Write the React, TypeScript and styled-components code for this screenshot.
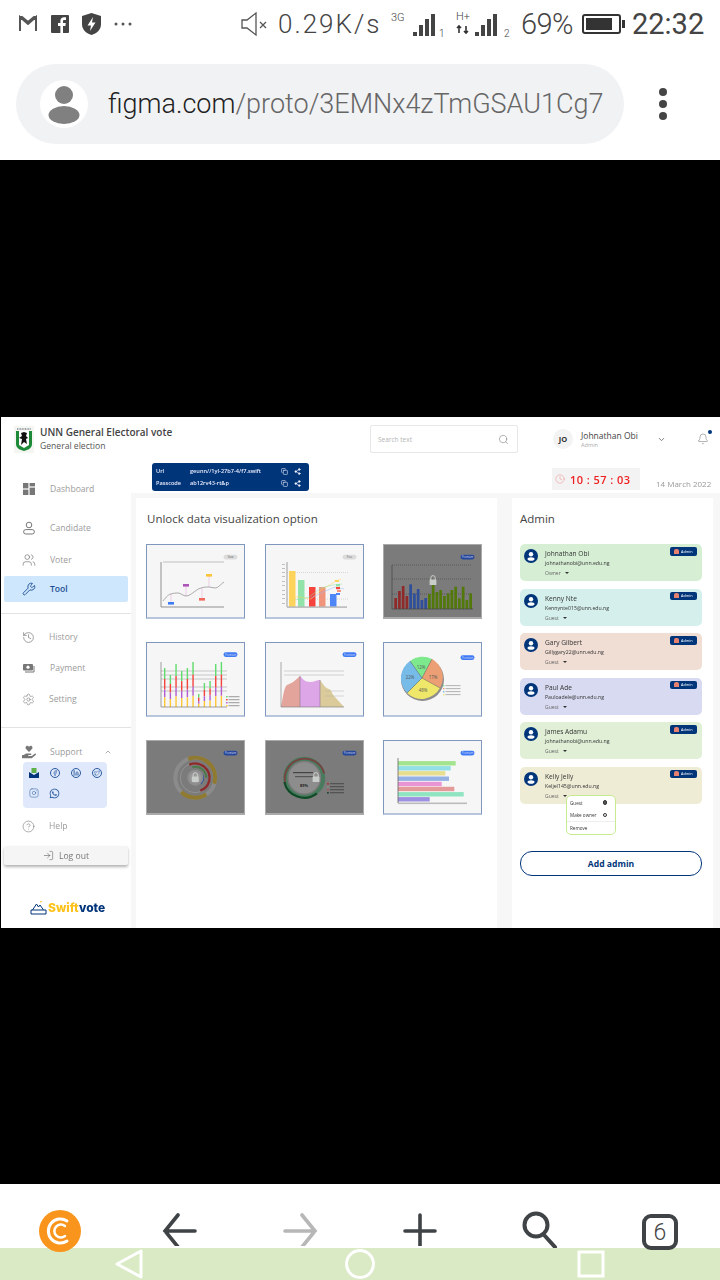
import React from "react";
import styled, { createGlobalStyle } from "styled-components";
import {
  Bell,
  ChevronDown,
  ChevronUp,
  CircleHelp,
  Clock,
  Copy,
  Facebook,
  History,
  Instagram,
  Linkedin,
  LogIn,
  Search,
  Settings,
  Share2,
  Twitter,
  Users,
  Wrench,
} from "lucide-react";
import { FaHandHoldingHeart, FaWhatsapp } from "react-icons/fa";

const NAVY = "#01357a";

const GlobalStyle = createGlobalStyle`
  html, body { margin: 0; padding: 0; background: #000; }
  * { box-sizing: border-box; }
`;

const Screen = styled.div`
  width: 720px;
  height: 1280px;
  background: #000;
  display: flex;
  flex-direction: column;
  overflow: hidden;
  font-family: "Open Sans", sans-serif;
`;

/* ---------- phone chrome ---------- */

const StatusBar = styled.div`
  height: 48px;
  background: #fff;
  display: flex;
  align-items: center;
  justify-content: space-between;
  padding: 0 16px 0 18px;
  color: #444;
  font-family: Roboto, sans-serif;
  font-weight: 300;
`;

const StatusGroup = styled.div<{ $gap: number }>`
  display: flex;
  align-items: center;
  gap: ${(p) => p.$gap}px;
`;

const Speed = styled.span`
  font-size: 26px;
  letter-spacing: 2px;
  width: 106px;
  margin-left: 2px;
  white-space: nowrap;
`;

const Percent = styled.span`
  font-size: 29px;
  width: 54px;
  letter-spacing: -0.6px;
`;

const Time = styled.span`
  font-size: 29px;
  font-weight: 400;
  width: 72px;
  white-space: nowrap;
`;

const UrlRow = styled.div`
  height: 112px;
  background: #fff;
  display: flex;
  align-items: center;
  padding: 0 0 0 16px;
  position: relative;
`;

const UrlPill = styled.div`
  width: 608px;
  height: 80px;
  background: #f1f2f4;
  border-radius: 40px;
  display: flex;
  align-items: center;
  padding-left: 24px;
  gap: 20px;
`;

const SiteBadge = styled.div`
  width: 48px;
  height: 48px;
  border-radius: 50%;
  background: #fff;
  display: flex;
  align-items: center;
  justify-content: center;
`;

const UrlText = styled.div`
  font-family: Roboto, sans-serif;
  font-weight: 300;
  font-size: 27px;
  color: #666;
  white-space: nowrap;
  b {
    font-weight: 300;
    color: #222;
  }
`;

const MoreDots = styled.div`
  margin-left: 35px;
  display: flex;
  flex-direction: column;
  gap: 4px;
  span {
    width: 8px;
    height: 8px;
    border-radius: 50%;
    background: #444;
  }
`;

const BlackBand = styled.div<{ $h: number }>`
  height: ${(p) => p.$h}px;
  flex: none;
`;

const ToolBar = styled.div`
  height: 64px;
  flex: none;
  background: #fff;
  display: grid;
  grid-template-columns: repeat(6, 120px);
  justify-items: center;
  padding-top: 26px;
  position: relative;
  z-index: 1;
  svg {
    display: block;
  }
`;

const TabCounter = styled.svg`
  margin-top: 3px;
`;

const NavBar = styled.div`
  height: 32px;
  flex: none;
  background: #d9eac5;
  display: flex;
  align-items: center;
  gap: 202px;
  padding-left: 115px;
  svg {
    display: block;
  }
`;

/* ---------- web frame ---------- */

const Frame = styled.div`
  height: 511px;
  flex: none;
  margin-left: 1px;
  background: #fff;
  display: grid;
  grid-template-columns: 130px 1fr;
  grid-template-rows: 43px 1fr;
  filter: blur(0.3px);
`;

const Header = styled.header`
  grid-column: 1 / 3;
  display: flex;
  align-items: center;
  padding-left: 13px;
  padding-top: 1px;
`;

const Brand = styled.div`
  width: 356px;
  display: flex;
  gap: 6px;
  align-items: center;
`;

const BrandTitle = styled.div`
  font-size: 10px;
  font-weight: 600;
  line-height: 14px;
  color: #444;
  white-space: nowrap;
`;

const BrandSub = styled.div`
  font-size: 8.6px;
  line-height: 14px;
  color: #555;
`;

const SearchBox = styled.div`
  width: 148px;
  height: 28px;
  border: 1px solid #e8e8e8;
  border-radius: 2px;
  display: flex;
  align-items: center;
  justify-content: space-between;
  padding: 0 8px 0 7px;
  font-size: 6.5px;
  color: #b5b5b5;
`;

const UserBlock = styled.div`
  margin-left: 35px;
  display: flex;
  align-items: center;
  width: 120px;
`;

const Initials = styled.div`
  width: 20px;
  height: 20px;
  border-radius: 50%;
  background: #f3f3f3;
  color: #333;
  font-size: 7.5px;
  font-weight: 700;
  display: flex;
  align-items: center;
  justify-content: center;
  margin-right: 8px;
`;

const UserName = styled.div`
  font-size: 8.5px;
  line-height: 11px;
  color: #444;
  white-space: nowrap;
`;

const UserRole = styled.div`
  font-size: 5.6px;
  line-height: 8px;
  color: #aaa;
`;

const UserCaret = styled.span`
  margin-left: 19px;
  display: flex;
`;

const BellWrap = styled.div`
  margin-left: 24px;
  position: relative;
  display: flex;
  &::after {
    content: "";
    position: absolute;
    right: -3px;
    top: -3px;
    width: 4px;
    height: 4px;
    border-radius: 50%;
    background: ${NAVY};
  }
`;

const Sidebar = styled.aside`
  display: flex;
  flex-direction: column;
  padding-top: 16px;
`;

const NavItem = styled.div<{ $active?: boolean; $after: number }>`
  height: 26px;
  flex: none;
  margin: 0 3px ${(p) => p.$after}px 3px;
  padding-left: 18px;
  border-radius: 2px;
  display: flex;
  align-items: center;
  gap: 14px;
  font-size: 8.6px;
  font-weight: ${(p) => (p.$active ? 600 : 400)};
  color: ${(p) => (p.$active ? "#1c4f92" : "#9b9b9b")};
  background: ${(p) => (p.$active ? "#cfe7fd" : "transparent")};
  svg {
    flex: none;
    color: ${(p) => (p.$active ? "#1c4f92" : "#777")};
  }
`;

const SideRule = styled.hr<{ $after: number }>`
  border: 0;
  height: 1px;
  width: 100%;
  background: #e2e2e2;
  margin: 0 0 ${(p) => p.$after}px 0;
  flex: none;
`;

const SupportCaret = styled.span`
  margin-left: 8px;
  display: flex;
`;

const SocialBox = styled.div`
  width: 84px;
  height: 46px;
  margin: -3px 0 5px 22px;
  flex: none;
  border-radius: 4px;
  background: #dfe9fb;
  display: grid;
  grid-template-columns: repeat(4, 21px);
  align-content: start;
  padding-top: 6px;
  row-gap: 10px;
  justify-items: center;
  color: #2a5a9f;
`;

const SocialRound = styled.span`
  width: 10px;
  height: 10px;
  border: 0.7px solid #2a5a9f;
  border-radius: 50%;
  display: flex;
  align-items: center;
  justify-content: center;
`;

const LogoutBar = styled.div`
  height: 19px;
  margin: 7px 3px 0 3px;
  flex: none;
  background: #f5f5f5;
  border-radius: 2px;
  box-shadow: 0 2px 3px rgba(0, 0, 0, 0.3);
  display: flex;
  align-items: center;
  justify-content: center;
  gap: 5px;
  font-size: 8.6px;
  color: #777;
`;

const SwiftLogo = styled.div`
  margin: 35px 0 0 29px;
  display: flex;
  align-items: center;
  gap: 1px;
  font-family: Inter, sans-serif;
  font-weight: 800;
  font-size: 12px;
  color: #ffc21a;
  b {
    font-weight: 800;
    color: ${NAVY};
  }
`;

const Content = styled.div`
  display: flex;
  flex-direction: column;
  min-height: 0;
`;

const SubRow = styled.div`
  height: 33px;
  flex: none;
  display: flex;
  align-items: flex-start;
  padding: 3px 8px 0 21px;
`;

const Credentials = styled.div`
  width: 157px;
  height: 28px;
  border-radius: 3px;
  background: ${NAVY};
  color: #eef;
  font-size: 5.6px;
  font-weight: 600;
  padding: 2px 0 0 4px;
`;

const CredRow = styled.div`
  height: 12px;
  display: grid;
  grid-template-columns: 34px 91px 13px 10px;
  align-items: center;
  svg {
    display: block;
  }
`;

const Timer = styled.div`
  margin: 5px 0 0 243px;
  width: 88px;
  height: 22px;
  background: #f3f3f3;
  display: flex;
  align-items: center;
  gap: 5px;
  padding-left: 3px;
  font-size: 11px;
  font-weight: 600;
  letter-spacing: 0.45px;
  color: #f01f1f;
  white-space: nowrap;
`;

const DateLabel = styled.div`
  margin: 15px 0 0 16px;
  font-size: 8px;
  color: #999;
  white-space: nowrap;
`;

const MainArea = styled.main`
  flex: 1;
  background: #f7f7f7;
  display: flex;
  gap: 15px;
  padding: 5px 7px 0 5px;
  min-height: 0;
`;

const Panel = styled.section<{ $w: number; $pl: number; $pr: number }>`
  width: ${(p) => p.$w}px;
  background: #fff;
  padding: 13px ${(p) => p.$pr}px 0 ${(p) => p.$pl}px;
  position: relative;
`;

const PanelTitle = styled.h2<{ $inset?: number }>`
  margin: 0 0 17px ${(p) => p.$inset ?? 0}px;
  font-size: 11.5px;
  line-height: 16px;
  font-weight: 400;
  color: #444;
  white-space: nowrap;
`;

const ChartGrid = styled.div`
  display: grid;
  grid-template-columns: repeat(3, 99px);
  grid-auto-rows: 75px;
  column-gap: 19.5px;
  row-gap: 23px;
`;

const ChartCard = styled.div<{ $locked?: boolean }>`
  background: ${(p) => (p.$locked ? "#7b7b7b" : "#f6f6f6")};
  border: 1px solid ${(p) => (p.$locked ? "#aaa" : "#7f97bd")};
  border-bottom: 2px solid ${(p) => (p.$locked ? "#aaa" : "#b7c6dd")};
  svg {
    display: block;
    margin: -1px;
    width: 99px;
    height: 75px;
  }
`;

const AdminList = styled.div`
  display: flex;
  flex-direction: column;
  gap: 7.5px;
`;

const AdminCard = styled.div<{ $bg: string }>`
  height: 37px;
  border-radius: 5px;
  background: ${(p) => p.$bg};
  display: flex;
  padding: 5px 5px 0 4px;
  position: relative;
`;

const AdminAvatar = styled.div`
  width: 14px;
  height: 14px;
  margin: 0 7px 0 0;
  flex: none;
  svg {
    display: block;
  }
`;

const AdminInfo = styled.div`
  flex: 1;
  min-width: 0;
`;

const AdminName = styled.div`
  font-size: 6.6px;
  line-height: 10px;
  font-weight: 500;
  color: #333;
`;

const AdminMail = styled.div`
  font-size: 5.2px;
  line-height: 9px;
  color: #333;
`;

const AdminRole = styled.div`
  margin-top: 1px;
  font-size: 5px;
  line-height: 8px;
  color: #666;
  display: flex;
  align-items: center;
  gap: 4px;
  &::after {
    content: "";
    border: 2px solid transparent;
    border-top: 2.5px solid #333;
    border-bottom: 0;
  }
`;

const AdminBadge = styled.div`
  width: 27px;
  height: 8.5px;
  margin-top: -2px;
  border-radius: 2px;
  background: ${NAVY};
  color: #fff;
  font-size: 3.8px;
  display: flex;
  align-items: center;
  justify-content: center;
  gap: 2px;
  flex: none;
  &::before {
    content: "";
    width: 4.5px;
    height: 5px;
    border-radius: 2px 2px 0 0;
    background: #e8806f;
  }
`;

const RolePopover = styled.div`
  position: absolute;
  left: 54px;
  top: 297px;
  width: 50px;
  height: 40px;
  margin-top: 0;
  background: #fff;
  border: 1px solid #c7ec8f;
  border-radius: 5px;
  font-size: 4.6px;
  color: #333;
  z-index: 2;
`;

const PopRow = styled.div<{ $h: number }>`
  height: ${(p) => p.$h}px;
  display: flex;
  align-items: center;
  justify-content: space-between;
  padding: 0 8px 0 3px;
`;

const PopRule = styled.div`
  height: 1px;
  background: #eee;
`;

const Radio = styled.span<{ $on?: boolean }>`
  width: 4.5px;
  height: 4.5px;
  border-radius: 50%;
  border: 0.7px solid #333;
  background: ${(p) => (p.$on ? "#555" : "#fff")};
`;

const AddAdmin = styled.button`
  display: block;
  width: 182px;
  height: 25px;
  margin-top: 47.5px;
  background: #fff;
  border: 1.2px solid ${NAVY};
  border-radius: 12px;
  color: ${NAVY};
  font-family: "Open Sans", sans-serif;
  font-size: 8.6px;
  font-weight: 700;
`;

/* ---------- small drawings ---------- */

function SignalIcon({ label, sim, arrows }: { label: string; sim: string; arrows?: boolean }) {
  return (
    <svg width="58" height="30" viewBox="0 0 58 30">
      <text x="0" y={arrows ? 11 : 12} fontSize="11" fill="#444" fontFamily="Roboto, sans-serif">{label}</text>
      {arrows && <path d="M3 24v-7m-2 2 2-2 2 2M10 17v7m-2-2 2 2 2-2" stroke="#333" strokeWidth="1.6" fill="none" />}
      <g fill="#444" transform={arrows ? "translate(-1 0)" : "translate(2 0)"}>
        <rect x="20" y="23" width="4" height="4" />
        <rect x="26" y="16" width="4" height="11" />
        <rect x="32" y="10" width="4" height="17" />
        <rect x="38" y="5" width="4" height="22" />
      </g>
      <text x="48" y="28" fontSize="10" fill="#444" fontFamily="Roboto, sans-serif">{sim}</text>
    </svg>
  );
}

function LockGlyph({ x, y }: { x: number; y: number }) {
  return (
    <g transform={`translate(${x} ${y})`}>
      <path d="M-2.2 0v-2.2a2.2 2.2 0 0 1 4.4 0V0" fill="none" stroke="#c9cdc9" strokeWidth="1" />
      <rect x="-3.4" y="-0.5" width="6.8" height="5.5" rx="0.6" fill="#c9cdc9" />
    </g>
  );
}

function Tag({ label, dark, grey, y = 13 }: { label: string; dark?: boolean; grey?: boolean; y?: number }) {
  const fill = grey ? "#dcdcdc" : dark ? "#24479b" : "#3f7bf5";
  return (
    <g>
      <rect x="77.5" y={y - 2.2} width="14" height="4.6" rx="2.3" fill={fill} />
      <text x="84.5" y={y + 1} textAnchor="middle" fontSize="2.6" fill={grey ? "#555" : "#dde"} fontFamily="Open Sans, sans-serif">{label}</text>
    </g>
  );
}

function LineChart() {
  return (
    <svg viewBox="0 0 99 75">
      <path d="M17 18h61" fill="none" stroke="#aaa" strokeWidth="0.7" />
      <path d="M15 18v45h63" fill="none" stroke="#666" strokeWidth="0.7" />
      <path d="M25 50v9M40 41v11M56 44v11M63 31v12" stroke="#e9b6dc" strokeWidth="0.6" />
      <path d="M17 57c3-4 6-7 8-7 3-1 5-1 7-1 3 0 5 3 8 3 5 0 10-7 15-8 3-1 5-1 8-1 2 0 4 1 6 1 3 0 6-4 9-6" fill="none" stroke="#777" strokeWidth="0.6" />
      <rect x="22" y="58" width="6" height="2.6" fill="#3f7bf5" />
      <rect x="37" y="40" width="6" height="2.6" fill="#ad55b8" />
      <rect x="53" y="54" width="6" height="2.6" fill="#ef6a5c" />
      <rect x="60" y="30" width="6" height="2.6" fill="#fbc43a" />
      <Tag label="View" grey />
    </svg>
  );
}

function MixedChart() {
  const bars = [
    { x: 24, y: 27, w: 6.5, c: "#fdd35c" },
    { x: 33, y: 36, w: 6.5, c: "#92e3a9" },
    { x: 44, y: 43, w: 6.5, c: "#f6433d" },
    { x: 54, y: 43, w: 6.5, c: "#f0957b" },
    { x: 65, y: 50, w: 6.5, c: "#4f86f7" },
  ];
  return (
    <svg viewBox="0 0 99 75">
      <path d="M22 18v45" stroke="#666" strokeWidth="0.6" />
      <path d="M22 28.5h61M22 55h61" stroke="#aaa" strokeWidth="0.4" strokeDasharray="1 1" />
      {bars.map((b) => (
        <rect key={b.x} x={b.x} y={b.y} width={b.w} height={63 - b.y} fill={b.c} />
      ))}
      <rect x="22" y="62.3" width="60" height="1.6" fill="#bbb" />
      <path d="M24 53h10l12 2 10-9 15-9 5-2" fill="none" stroke="#fdd35c" strokeWidth="0.5" />
      <path d="M30 56l14-3 12-9 12-3 9-1" fill="none" stroke="#92e3a9" strokeWidth="0.5" />
      <path d="M46 54l12-6 12-5 9 2" fill="none" stroke="#9bb8f7" strokeWidth="0.5" />
      <rect x="70" y="36" width="4" height="2" fill="#fdd35c" />
      <rect x="71" y="40" width="4" height="2.4" fill="#92e3a9" />
      <rect x="71" y="43" width="4" height="2.2" fill="#f6433d" />
      <rect x="72" y="46" width="4" height="2" fill="#f0957b" />
      <rect x="71" y="49" width="4" height="2" fill="#4f86f7" />
      {[20, 24, 28, 32, 37, 41, 46, 50, 54, 59].map((y) => (
        <rect key={y} x="17" y={y} width="3" height="0.7" fill="#aaa" />
      ))}
      <Tag label="Free" grey />
    </svg>
  );
}

function LockedBars() {
  const tops = [189, 168, 153, 183, 148, 175, 162, 195, 189, 177, 145, 171, 165, 183, 175, 165, 155, 190, 155, 195, 175];
  return (
    <svg viewBox="0 0 99 75">
      <path d="M9 21h80M9 35h80M9 50h80" stroke="#3a3a3a" strokeWidth="0.5" strokeDasharray="1 1" />
      {tops.map((t, i) => (
        <rect
          key={i}
          x={11.3 + i * 3.75}
          y={(t - 27) / 3}
          width="2.7"
          height={65 - (t - 27) / 3}
          fill={i < 4 ? "#8f2a2a" : i < 9 ? "#2f4f9a" : "#52780a"}
        />
      ))}
      <path d="M9 21v44h81" fill="none" stroke="#444" strokeWidth="0.7" />
      <LockGlyph x={50} y={36} />
      <Tag label="Premium" dark />
    </svg>
  );
}

function StackedChart() {
  const tops = [26, 33, 22, 29, 26, 20, 52, 41, 39, 22, 20];
  return (
    <svg viewBox="0 0 99 75">
      <path d="M15 29h66M15 33h66M15 37h66M15 45h66M15 49h66" stroke="#aaa" strokeWidth="0.6" />
      {tops.map((t, i) => {
        const x = 18 + i * 5.67;
        const h = 65 - t;
        return (
          <g key={i}>
            <rect x={x} y={t} width="1.4" height={h * 0.28} fill="#5fdc6b" />
            <rect x={x} y={t + h * 0.28} width="1.4" height={h * 0.27} fill="#f4433c" />
            <rect x={x} y={t + h * 0.55} width="1.4" height={h * 0.2} fill="#b35dd0" />
            <rect x={x} y={t + h * 0.75} width="1.4" height={h * 0.25} fill="#fdc736" />
          </g>
        );
      })}
      <path d="M15 20v45h66" fill="none" stroke="#666" strokeWidth="0.6" />
      {[
        [55, "#5fdc6b"],
        [58, "#f4433c"],
        [61, "#b35dd0"],
        [64, "#fdc736"],
      ].map(([y, c]) => (
        <g key={c as string}>
          <rect x="80" y={(y as number) - 1} width="1.6" height="1.4" fill={c as string} />
          <rect x="82.5" y={(y as number) - 0.8} width="11" height="1" fill="#999" />
        </g>
      ))}
      <Tag label="Premium" y={12.5} />
    </svg>
  );
}

function AreaChart() {
  return (
    <svg viewBox="0 0 99 75">
      <path d="M19 29h60M19 33h60" stroke="#bbb" strokeWidth="0.6" />
      <path d="M16 65c2-10 3-20 6-22 3-1 7-3 13-9v31z" fill="#e3a59b" />
      <path d="M35 34c3 3 5 6 10 6 4 0 7-2 10-2v27H35z" fill="#dda6e6" />
      <path d="M55 38c3 4 5 8 9 9 3 1 3 6 6 8 3 3 6 7 9 10H55z" fill="#dccb9a" />
      <path d="M35 34v31M55 38v27" stroke="#8a7a90" strokeWidth="0.6" />
      <path d="M60 49h19M60 54h19" stroke="#aaa" strokeWidth="0.4" />
      <path d="M16 20v45h63" fill="none" stroke="#777" strokeWidth="0.6" />
      <Tag label="Premium" y={12.5} />
    </svg>
  );
}

function PieChart() {
  return (
    <svg viewBox="0 0 99 75">
      <circle cx="39.5" cy="37.5" r="21.5" fill="#8d8d8d" />
      <path d="M39 36L27 19a21 21 0 0 1 22-2z" fill="#7de88c" />
      <path d="M39 36L49 17a21 21 0 0 1 8 29z" fill="#ec9f74" />
      <path d="M39 36l18 10a21 21 0 0 1-33 5z" fill="#efe76a" />
      <path d="M39 36L24 51a21 21 0 0 1 3-32z" fill="#77bbe9" />
      <path d="M27 19l12 17 10-19M39 36l18 10M39 36L24 51" fill="none" stroke="#555" strokeWidth="0.4" />
      <g fontSize="4.4" fill="#555" fontFamily="Open Sans, sans-serif" textAnchor="middle">
        <text x="38" y="27">12%</text>
        <text x="50" y="37">17%</text>
        <text x="40" y="50">48%</text>
        <text x="27" y="37">22%</text>
      </g>
      {[
        [43, "#7de88c"],
        [46, "#ec9f74"],
        [49, "#77bbe9"],
        [52, "#efe76a"],
      ].map(([y, c]) => (
        <g key={c as string}>
          <rect x="60" y={y as number} width="1.4" height="1.4" fill={c as string} />
          <rect x="62.5" y={(y as number) + 0.2} width="15" height="0.9" fill="#aaa" />
        </g>
      ))}
      <Tag label="Premium" y={15.5} />
    </svg>
  );
}

function LockedRings() {
  return (
    <svg viewBox="0 0 99 75">
      <g fill="none" transform="translate(49.3 37.7)">
        <circle r="20" stroke="#8b8b8b" strokeWidth="4" />
        <path d="M-7-18.7A20 20 0 0 1 19 6M11 16.7A20 20 0 0 1-14 14.3" stroke="#8f7a2f" strokeWidth="4" />
        <circle r="15" stroke="#a0a0a0" strokeWidth="0.6" />
        <path d="M-6-13A14.5 14.5 0 0 1 14 3 14.5 14.5 0 0 1 5 13" stroke="#8f2a2a" strokeWidth="2.4" />
        <path d="M-3-10.5A11 11 0 0 1 11 0" stroke="#4d7a4a" strokeWidth="2" />
        <path d="M7-3A8 8 0 0 1 5 6" stroke="#2f4f9a" strokeWidth="2" />
        <circle r="8" fill="#8e8e8e" />
        <circle r="5.5" fill="#9b9b9b" />
      </g>
      <LockGlyph x={49.3} y={37} />
      <Tag label="Premium" dark />
    </svg>
  );
}

function LockedDonut() {
  return (
    <svg viewBox="0 0 99 75">
      <g fill="none" transform="translate(39.3 37.7)">
        <circle r="19" stroke="#4a7a5e" strokeWidth="4" />
        <path d="M-18 6A19 19 0 0 1 19 -4" stroke="#7a3f3f" strokeWidth="1.6" transform="scale(1.05)" />
        <path d="M-19 4A19.5 19.5 0 0 0 12 15" stroke="#0f4a26" strokeWidth="2" transform="scale(1.05)" />
        <circle r="15.5" fill="#8d8d8d" />
      </g>
      <rect x="28" y="32" width="20" height="1.2" fill="#444" />
      <rect x="30" y="36" width="18" height="1.2" fill="#555" />
      <text x="39" y="46.5" fontSize="3.8" fontWeight="700" fill="#222" textAnchor="middle" fontFamily="Open Sans, sans-serif">89%</text>
      {[
        ["43", "#a33"],
        ["46", "#888"],
        ["49", "#a55"],
        ["52", "#243"],
      ].map(([y, c]) => (
        <g key={y}>
          <rect x="62" y={y} width="1.8" height="1.6" fill={c} />
          <rect x="65" y={Number(y) + 0.3} width="14" height="0.9" fill="#444" />
        </g>
      ))}
      <LockGlyph x={51} y={37} />
      <Tag label="Premium" dark />
    </svg>
  );
}

function HorizontalBars() {
  const rows = [
    [23.3, 57.7, "#a3e58e"],
    [28.3, 52.7, "#92e0e5"],
    [33.3, 47.3, "#e8de8f"],
    [38.7, 51, "#94b1e5"],
    [44, 43.7, "#e894d5"],
    [49, 56.3, "#e59a9a"],
    [54.3, 65.7, "#8fe5c2"],
    [59.3, 31.7, "#9d90e0"],
  ] as const;
  return (
    <svg viewBox="0 0 99 75">
      {rows.map(([y, w, c]) => (
        <rect key={c} x="15" y={y - 2.2} width={w} height="4.4" fill={c} />
      ))}
      <rect x="15" y="62.5" width="69" height="1.6" fill="#bbb" />
      <path d="M15 18v45" stroke="#555" strokeWidth="0.7" />
      <Tag label="Premium" />
    </svg>
  );
}

function UnnCrest() {
  return (
    <svg width="20" height="27" viewBox="0 0 20 27">
      <rect width="20" height="27" fill="#f4f6f2" />
      <path d="M3 3h14" stroke="#556" strokeWidth="1.2" strokeDasharray="1 .6" />
      <path d="M2 5h16v13c0 4-4 6-8 7-4-1-8-3-8-7z" fill="#1d8a3a" />
      <path d="M5 5h10v14l-5 3-5-3z" fill="#fff" />
      <path d="M7 7l3-1 3 1-1 3 2 2-2 1 1 5-3-2-3 3 1-6-3-1 3-2z" fill="#111" />
    </svg>
  );
}

function PersonDot() {
  return (
    <svg width="14" height="14" viewBox="0 0 14 14">
      <circle cx="7" cy="7" r="7" fill={NAVY} />
      <circle cx="7" cy="5.2" r="2.2" fill="#fff" />
      <ellipse cx="7" cy="10" rx="3.5" ry="1.8" fill="#fff" />
    </svg>
  );
}

const navTop = [
  {
    label: "Dashboard",
    after: 13,
    icon: (
      <svg width="14" height="14" viewBox="0 0 14 14" fill="#777">
        <rect x="1" y="1" width="5.4" height="5.4" />
        <rect x="7.6" y="1" width="5.4" height="3.4" />
        <rect x="1" y="7.6" width="5.4" height="5.4" />
        <rect x="7.6" y="5.6" width="5.4" height="7.4" />
      </svg>
    ),
  },
  {
    label: "Candidate",
    after: 6,
    icon: (
      <svg width="14" height="14" viewBox="0 0 14 14" fill="none" stroke="#777" strokeWidth="1">
        <circle cx="7" cy="4" r="2.8" />
        <rect x="1.6" y="8.6" width="10.8" height="4.4" rx="2.2" />
      </svg>
    ),
  },
  { label: "Voter", after: 3, icon: <Users size={14} strokeWidth={1.2} /> },
  { label: "Tool", after: 11, active: true, icon: <Wrench size={14} strokeWidth={1.6} /> },
];

const navMiddle = [
  { label: "History", after: 5, icon: <History size={13} strokeWidth={1.3} /> },
  {
    label: "Payment",
    after: 5,
    icon: (
      <svg width="14" height="14" viewBox="0 0 14 14">
        <rect x="1" y="3" width="10" height="6.5" rx="1" fill="#777" />
        <circle cx="6" cy="6.2" r="1.6" fill="#fff" />
        <path d="M3 11h9V5" fill="none" stroke="#777" strokeWidth="1" />
      </svg>
    ),
  },
  { label: "Setting", after: 15, icon: <Settings size={13} strokeWidth={1.1} /> },
];

const admins = [
  { name: "Johnathan Obi", mail: "johnathanobi@unn.edu.ng", role: "Owner", bg: "#d6efd4" },
  { name: "Kenny Nte", mail: "Kennynte015@unn.edu.ng", role: "Guest", bg: "#d5f0ec" },
  { name: "Gary Gilbert", mail: "Gillygary22@unn.edu.ng", role: "Guest", bg: "#f0ddd4" },
  { name: "Paul Ade", mail: "Pauloadele@unn.edu.ng", role: "Guest", bg: "#d7daf0" },
  { name: "James Adamu", mail: "johnathanobi@unn.edu.ng", role: "Guest", bg: "#e0efd6" },
  { name: "Kelly Jelly", mail: "Keljel145@unn.edu.ng", role: "Guest", bg: "#efecd6" },
];

const charts = [
  { id: "line", node: <LineChart /> },
  { id: "mixed", node: <MixedChart /> },
  { id: "bars", node: <LockedBars />, locked: true },
  { id: "stack", node: <StackedChart /> },
  { id: "area", node: <AreaChart /> },
  { id: "pie", node: <PieChart /> },
  { id: "rings", node: <LockedRings />, locked: true },
  { id: "donut", node: <LockedDonut />, locked: true },
  { id: "hbars", node: <HorizontalBars /> },
];

export default function App() {
  return (
    <Screen>
      <GlobalStyle />
      <StatusBar>
        <StatusGroup $gap={13}>
          <svg width="20" height="18" viewBox="0 0 20 18" fill="none" stroke="#555" strokeWidth="2">
            <path d="M2 16V2l8 7 8-7v14M2 2h2l6 5 6-5h2" />
          </svg>
          <svg width="18" height="18" viewBox="0 0 18 18">
            <rect width="18" height="18" rx="1" fill="#444" />
            <path d="M12 18v-7h2.4l.4-3H12V6.400c0-.9.3-1.400 1.400-1.400H15V2.300C14.700 2.200 13.900 2.200 13 2.200c-2 0-3.600 1.300-3.600 3.700V8H7v3h2.400v7z" fill="#fff" />
          </svg>
          <svg width="19" height="22" viewBox="0 0 19 22">
            <path d="M9.500 0L19 3v8c0 6-4.500 9.500-9.500 11C4.500 20.500 0 17 0 11V3z" fill="#444" />
            <path d="M11 4L5.500 12.500H9L8 18l5.500-8.500H10z" fill="#fff" />
          </svg>
          <svg width="18" height="4" viewBox="0 0 18 4" fill="#555">
            <circle cx="2" cy="2" r="1.500" />
            <circle cx="9" cy="2" r="1.500" />
            <circle cx="16" cy="2" r="1.500" />
          </svg>
        </StatusGroup>
        <StatusGroup $gap={7}>
          <svg width="28" height="26" viewBox="0 0 28 26" fill="none" stroke="#555" strokeWidth="1.300">
            <path d="M1 9v8h5l9 7V2L6 9zM19 11l6 6m0-6l-6 6" />
          </svg>
          <Speed>0.29K/s</Speed>
          <SignalIcon label="3G" sim="1" />
          <SignalIcon label="H+" sim="2" arrows />
          <Percent>69%</Percent>
          <svg width="43" height="20" viewBox="0 0 43 20">
            <rect x="1" y="1" width="37" height="18" rx="2" fill="none" stroke="#333" strokeWidth="2" />
            <rect x="4" y="4" width="26" height="12" fill="#333" />
            <rect x="40" y="6" width="3" height="8" fill="#333" />
          </svg>
          <Time>22:32</Time>
        </StatusGroup>
      </StatusBar>
      <UrlRow>
        <UrlPill>
          <SiteBadge>
            <svg width="32" height="42" viewBox="0 0 32 42" fill="#808080">
              <circle cx="16" cy="12" r="9" />
              <ellipse cx="16" cy="32" rx="15.500" ry="9" />
            </svg>
          </SiteBadge>
          <UrlText>
            <b>figma.com</b>/proto/3EMNx4zTmGSAU1Cg7
          </UrlText>
        </UrlPill>
        <MoreDots>
          <span />
          <span />
          <span />
        </MoreDots>
      </UrlRow>
      <BlackBand $h={257} />
      <Frame>
        <Header>
          <Brand>
            <UnnCrest />
            <div>
              <BrandTitle>UNN General Electoral vote</BrandTitle>
              <BrandSub>General election</BrandSub>
            </div>
          </Brand>
          <SearchBox>
            Search text
            <Search size={11} strokeWidth={1.2} color="#777" />
          </SearchBox>
          <UserBlock>
            <Initials>JO</Initials>
            <div>
              <UserName>Johnathan Obi</UserName>
              <UserRole>Admin</UserRole>
            </div>
            <UserCaret>
              <ChevronDown size={9} color="#555" />
            </UserCaret>
          </UserBlock>
          <BellWrap>
            <Bell size={12} strokeWidth={1.1} color="#777" />
          </BellWrap>
        </Header>
        <Sidebar>
          {navTop.map((item) => (
            <NavItem key={item.label} $after={item.after} $active={item.active}>
              {item.icon}
              {item.label}
            </NavItem>
          ))}
          <SideRule $after={10} />
          {navMiddle.map((item) => (
            <NavItem key={item.label} $after={item.after}>
              {item.icon}
              {item.label}
            </NavItem>
          ))}
          <SideRule $after={11} />
          <NavItem $after={0}>
            <FaHandHoldingHeart size={14} />
            <span>Support</span>
            <SupportCaret>
              <ChevronUp size={8} color="#888" />
            </SupportCaret>
          </NavItem>
          <SocialBox>
            <svg width="10" height="10" viewBox="0 0 10 10">
              <path d="M0 4l5 3 5-3v6H0z" fill={NAVY} />
              <rect x="2.500" y="0" width="5" height="5" fill="#5fb04a" />
            </svg>
            <SocialRound><Facebook size={6} /></SocialRound>
            <SocialRound><Linkedin size={6} /></SocialRound>
            <SocialRound><Twitter size={6} /></SocialRound>
            <Instagram size={10} strokeWidth={1.2} />
            <FaWhatsapp size={11} />
          </SocialBox>
          <NavItem $after={0}>
            <CircleHelp size={13} strokeWidth={1.1} />
            Help
          </NavItem>
          <LogoutBar>
            <LogIn size={11} strokeWidth={1.2} color="#555" />
            Log out
          </LogoutBar>
          <SwiftLogo>
            <svg width="17" height="14" viewBox="0 0 17 14" fill="none" stroke={NAVY} strokeWidth="1">
              <path d="M1 9h15v4H1zM2.500 9l4-6 2 3 1.500-2 3.500 5" />
              <path d="M10 1l2-.5" stroke="#ffc21a" />
            </svg>
            <span>
              Swift<b>vote</b>
            </span>
          </SwiftLogo>
        </Sidebar>
        <Content>
          <SubRow>
            <Credentials>
              <CredRow>
                <span>Url</span>
                <span>geunn//1yl-27b7-4/f7.swift</span>
                <Copy size={7} />
                <Share2 size={7} fill="#fff" />
              </CredRow>
              <CredRow>
                <span>Passcode</span>
                <span>ab12rv43-rt&amp;p</span>
                <Copy size={7} />
                <Share2 size={7} fill="#fff" />
              </CredRow>
            </Credentials>
            <Timer>
              <Clock size={10} strokeWidth={1.2} color="#ee8a8a" />
              10 : 57 : 03
            </Timer>
            <DateLabel>14 March 2022</DateLabel>
          </SubRow>
          <MainArea>
            <Panel $w={361} $pl={10} $pr={10}>
              <PanelTitle $inset={1}>Unlock data visualization option</PanelTitle>
              <ChartGrid>
                {charts.map((c) => (
                  <ChartCard key={c.id} $locked={c.locked}>
                    {c.node}
                  </ChartCard>
                ))}
              </ChartGrid>
            </Panel>
            <Panel $w={201} $pl={8} $pr={11}>
              <PanelTitle>Admin</PanelTitle>
              <AdminList>
                {admins.map((a) => (
                  <AdminCard key={a.name} $bg={a.bg}>
                    <AdminAvatar>
                      <PersonDot />
                    </AdminAvatar>
                    <AdminInfo>
                      <AdminName>{a.name}</AdminName>
                      <AdminMail>{a.mail}</AdminMail>
                      <AdminRole>{a.role}</AdminRole>
                    </AdminInfo>
                    <AdminBadge>Admin</AdminBadge>
                  </AdminCard>
                ))}
              </AdminList>
              <RolePopover>
                <PopRow $h={13}>Guest<Radio $on /></PopRow>
                <PopRow $h={12}>Make owner<Radio /></PopRow>
                <PopRule />
                <PopRow $h={12}>Remove</PopRow>
              </RolePopover>
              <AddAdmin>Add admin</AddAdmin>
            </Panel>
          </MainArea>
        </Content>
      </Frame>
      <BlackBand $h={256} />
      <ToolBar>
        <svg width="42" height="42" viewBox="0 0 42 42">
          <ellipse cx="21" cy="21" rx="21" ry="21" fill="#f9951d" />
          <path d="M28 11a12 12 0 1 0 0 20" fill="none" stroke="#fff" strokeWidth="3" strokeLinecap="round" />
          <path d="M26 16a6.500 6.500 0 1 0 0 10" fill="none" stroke="#fff" strokeWidth="2.500" strokeLinecap="round" />
        </svg>
        <svg width="36" height="36" viewBox="0 0 36 36" fill="none" stroke="#3f4346" strokeWidth="3.600" strokeLinecap="round">
          <path d="M33 21H3M16 5L3 21l13 16" />
        </svg>
        <svg width="36" height="36" viewBox="0 0 36 36" fill="none" stroke="#b7b7b7" strokeWidth="3.600" strokeLinecap="round">
          <path d="M3 21h30M20 5l13 16-13 16" />
        </svg>
        <svg width="36" height="36" viewBox="0 0 36 36" fill="none" stroke="#3f4346" strokeWidth="3.600" strokeLinecap="round">
          <path d="M3 21h30M18 5v32" />
        </svg>
        <svg width="38" height="38" viewBox="0 0 38 38" fill="none" stroke="#3f4346" strokeWidth="4" strokeLinecap="round">
          <circle cx="15" cy="15" r="11.500" />
          <path d="M24 26l10 11" />
        </svg>
        <TabCounter width="38" height="38" viewBox="0 0 38 38">
          <rect x="3" y="3" width="32" height="32" rx="7" fill="none" stroke="#3f4346" strokeWidth="4" />
          <text x="19" y="27" textAnchor="middle" fontSize="23" fontWeight="300" fontFamily="Roboto, sans-serif" fill="#444">6</text>
        </TabCounter>
      </ToolBar>
      <NavBar>
        <svg width="28" height="30" viewBox="0 0 28 30" fill="none" stroke="#fff" strokeWidth="3" strokeLinejoin="round">
          <path d="M26 2v26L2 15z" />
        </svg>
        <svg width="30" height="30" viewBox="0 0 30 30" fill="none" stroke="#fff" strokeWidth="3">
          <circle cx="15" cy="15" r="13.500" />
        </svg>
        <svg width="28" height="28" viewBox="0 0 28 28" fill="none" stroke="#fff" strokeWidth="3">
          <rect x="2" y="2" width="24" height="24" />
        </svg>
      </NavBar>
    </Screen>
  );
}
